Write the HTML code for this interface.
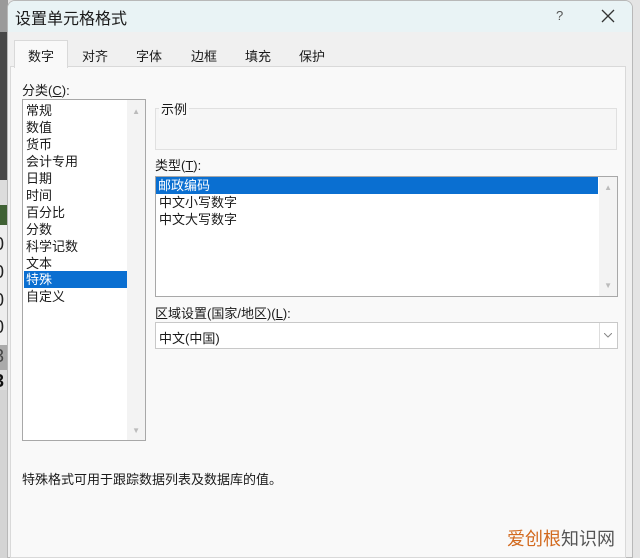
<!DOCTYPE html>
<html><head><meta charset="utf-8"><style>
*{margin:0;padding:0;box-sizing:border-box}
body{width:640px;height:558px;position:relative;overflow:hidden;background:#e4e4e4;font-family:"Liberation Sans","Microsoft YaHei","Noto Sans CJK SC",sans-serif;font-size:13px;color:#1a1a1a}
.a{position:absolute}
.li{position:absolute;left:3px;height:17px;line-height:17px;white-space:nowrap}
</style></head><body>
<!-- background excel -->
<div class="a" style="left:0;top:0;width:8px;height:32px;background:#9a9a9a"></div>
<div class="a" style="left:0;top:32px;width:8px;height:148px;background:#474747"></div>
<div class="a" style="left:0;top:180px;width:8px;height:25px;background:#dcdcdc"></div>
<div class="a" style="left:0;top:205px;width:8px;height:20px;background:#3f6134"></div>
<div class="a" style="left:0;top:225px;width:8px;height:120px;background:#eeeeee"></div>
<div class="a" style="left:0;top:345px;width:8px;height:25px;background:#aaa"></div>
<div class="a" style="left:0;top:370px;width:8px;height:20px;background:#ddd"></div>
<div class="a" style="left:-6px;top:234px;font-size:18px;line-height:20px;color:#222">0<br><br></div>
<div class="a" style="left:-6px;top:262px;font-size:18px;color:#222">0</div>
<div class="a" style="left:-6px;top:290px;font-size:18px;color:#222">0</div>
<div class="a" style="left:-6px;top:317px;font-size:18px;color:#222">0</div>
<div class="a" style="left:-6px;top:346px;font-size:18px;color:#444">3</div>
<div class="a" style="left:-6px;top:371px;font-size:18px;font-weight:bold;color:#111">3</div>
<div class="a" style="left:0;top:390px;width:8px;height:168px;background:#d4d4d4"></div>
<!-- dialog -->
<div class="a" style="left:7px;top:0;width:626px;height:558px;background:#f0f0f0;border-radius:8px 8px 0 0;border:1px solid #b8b8b8"></div>
<div class="a" style="left:8px;top:1px;width:624px;height:31px;background:#e9f3f5;border-radius:7px 7px 0 0"></div>
<div class="a" style="left:15px;top:5px;font-size:16px">设置单元格格式</div>
<div class="a" style="left:556px;top:8px;font-size:13px;color:#555">?</div>
<svg class="a" style="left:601px;top:9px" width="14" height="14"><path d="M1 1L13 13M13 1L1 13" stroke="#333" stroke-width="1.3"/></svg>
<!-- tabs -->
<div class="a" style="left:10px;top:66px;width:616px;height:492px;background:#f9f9f9;border:1px solid #d9d9d9"></div>
<div class="a" style="left:14px;top:40px;width:54px;height:28px;background:#f9f9f9;border:1px solid #d9d9d9;border-bottom:none"></div>
<div class="a" style="left:28px;top:46px">数字</div>
<div class="a" style="left:82px;top:46px">对齐</div>
<div class="a" style="left:136px;top:46px">字体</div>
<div class="a" style="left:191px;top:46px">边框</div>
<div class="a" style="left:245px;top:46px">填充</div>
<div class="a" style="left:299px;top:46px">保护</div>
<div class="a" style="left:22px;top:80px">分类(<u>C</u>):</div>
<!-- category list -->
<div class="a" style="left:22px;top:99px;width:124px;height:342px;background:#fff;border:1px solid #a8a8a8">
<div class="a" style="right:0;top:0;width:18px;height:340px;background:#f3f3f3"></div>
<div class="a" style="right:5px;top:7px;font-size:8px;color:#bbb">▲</div>
<div class="a" style="right:5px;top:326px;font-size:8px;color:#bbb">▼</div>
<div class="li" style="top:2px">常规</div>
<div class="li" style="top:19px">数值</div>
<div class="li" style="top:36px">货币</div>
<div class="li" style="top:53px">会计专用</div>
<div class="li" style="top:70px">日期</div>
<div class="li" style="top:87px">时间</div>
<div class="li" style="top:104px">百分比</div>
<div class="li" style="top:121px">分数</div>
<div class="li" style="top:138px">科学记数</div>
<div class="li" style="top:155px">文本</div>
<div class="li" style="top:171px;left:1px;width:103px;background:#0a6fd1;color:#fff;padding-left:2px">特殊</div>
<div class="li" style="top:188px">自定义</div>
</div>
<!-- sample -->
<div class="a" style="left:155px;top:108px;width:462px;height:42px;border:1px solid #e0e0e0;background:#f6f6f6"></div>
<div class="a" style="left:159px;top:99px;background:#f9f9f9;padding:0 2px">示例</div>
<div class="a" style="left:155px;top:155px">类型(<u>T</u>):</div>
<div class="a" style="left:155px;top:176px;width:463px;height:121px;background:#fff;border:1px solid #a8a8a8">
<div class="a" style="right:0;top:0;width:18px;height:119px;background:#f3f3f3"></div>
<div class="a" style="right:5px;top:6px;font-size:8px;color:#bbb">▲</div>
<div class="a" style="right:5px;top:104px;font-size:8px;color:#bbb">▼</div>
<div class="li" style="top:0;left:0;width:442px;background:#0a6fd1;color:#fff;padding-left:2px">邮政编码</div>
<div class="li" style="top:17px">中文小写数字</div>
<div class="li" style="top:34px">中文大写数字</div>
</div>
<div class="a" style="left:155px;top:303px">区域设置(国家/地区)(<u>L</u>):</div>
<div class="a" style="left:155px;top:322px;width:463px;height:27px;background:#fff;border:1px solid #c8c8c8">
<div class="a" style="left:3px;top:5px">中文(中国)</div>
<div class="a" style="right:0;top:0;width:18px;height:25px;border-left:1px solid #ddd"></div>
<svg class="a" style="right:5px;top:10px" width="8" height="5"><path d="M0 0L4 4L8 0" stroke="#888" fill="none"/></svg>
</div>
<div class="a" style="left:22px;top:469px">特殊格式可用于跟踪数据列表及数据库的值。</div>
<div class="a" style="left:507px;top:525px;font-size:18px;color:#d2691e">爱创根<span style="color:#555">知识网</span></div>
</body></html>
